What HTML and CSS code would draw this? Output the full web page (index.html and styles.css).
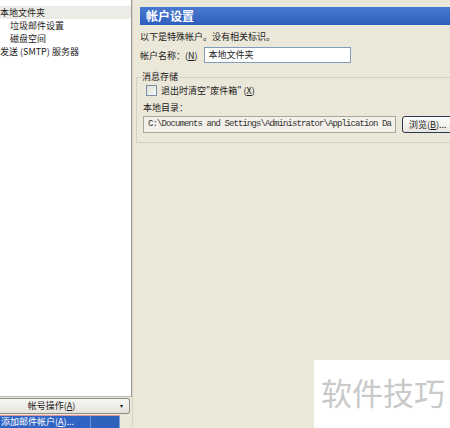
FILE: index.html
```html
<!DOCTYPE html>
<html lang="zh-CN">
<head>
<meta charset="utf-8">
<title>帐户设置</title>
<link rel="stylesheet" href="styles.css">
</head>
<body>
<div class="app">
  <aside class="side">
    <ul class="tree">
      <li class="node root selected">本地文件夹</li>
      <li class="node child">垃圾邮件设置</li>
      <li class="node child">磁盘空间</li>
      <li class="node root">发送 (SMTP) 服务器</li>
    </ul>
    <div class="actions">帐号操作(<u>A</u>)<span class="drop">▾</span></div>
    <div class="menu">
      <div class="menu-item">添加邮件帐户(<u>A</u>)...</div>
    </div>
  </aside>

  <main class="pane">
    <h1 class="title">帐户设置</h1>
    <p class="note">以下是特殊帐户。没有相关标识。</p>
    <div class="field-row">
      <label class="label">帐户名称：(<u>N</u>)</label>
      <div class="input name">本地文件夹</div>
    </div>

    <fieldset class="group">
      <legend class="legend">消息存储</legend>
      <label class="check-row">
        <span class="checkbox"></span>
        <span>退出时清空"废件箱" (<u>X</u>)</span>
      </label>
      <div class="label dir-label">本地目录：</div>
      <div class="dir-row">
        <div class="input path">C:\Documents and Settings\Administrator\Application Da</div>
        <button class="btn">浏览(<u>B</u>)...</button>
      </div>
    </fieldset>
  </main>
</div>
<div class="stamp">软件技巧</div>
</body>
</html>
```

FILE: styles.css
```css
html, body {
  margin: 0;
  padding: 0;
}

body {
  width: 450px;
  height: 428px;
  overflow: hidden;
  position: relative;
  background: #ebe7d9;
  font-family: "Noto Sans CJK SC", "Liberation Sans", sans-serif;
  font-size: 9px;
  color: #1a1a1a;
}

u {
  text-decoration: underline;
}

.app {
  display: flex;
  height: 428px;
}

/* left column: folder tree, action button, popup menu */
.side {
  width: 132px;
  display: flex;
  flex-direction: column;
  flex-shrink: 0;
}

.tree {
  list-style: none;
  margin: 0;
  padding: 6px 0 0;
  flex: 1;
  background: #fff;
  border-right: 1px solid #9c9c9c;
  border-bottom: 1px solid #b8b8b8;
}

.node {
  height: 13px;
  line-height: 13px;
  white-space: nowrap;
}

.node.child {
  padding-left: 10px;
}

.node.selected {
  background: #ecebe6;
}

.actions {
  height: 14px;
  line-height: 14px;
  margin: 1px 2px 0 0;
  position: relative;
  text-align: center;
  padding-right: 26px;
  background: linear-gradient(#f8f8f6, #e4e2da);
  border: 1px solid #8d8d86;
  border-left: none;
  border-radius: 0 3px 3px 0;
}

.drop {
  position: absolute;
  right: 6px;
  top: 0;
  font-size: 6px;
}

.menu {
  display: flex;
  margin-top: 1px;
  border-top: 1px solid #e29393;
  width: 120px;
}

.menu-item {
  flex: 1;
  height: 12px;
  line-height: 12px;
  background: #2f64c4;
  color: #fff;
  white-space: nowrap;
  overflow: hidden;
  border-right: 1px solid #7fa0dc;
  box-shadow: inset -28px 0 0 #2f62bd, inset -29px 0 0 #6b8fd6;
  padding-left: 1px;
}

/* right column: settings page */
.pane {
  flex: 1;
  padding: 7px 0 0 7px;
  border-left: 1px solid #d8d4c4;
  min-width: 0;
}

.title {
  margin: 0;
  height: 18px;
  line-height: 18px;
  padding-left: 6px;
  font-size: 12px;
  font-weight: bold;
  color: #fff;
  background: linear-gradient(#4a78cf, #2f5fbd);
}

.note {
  margin: 5px 0 0;
  line-height: 13px;
}

.field-row {
  display: flex;
  align-items: center;
  margin-top: 4px;
  gap: 6px;
}

.label {
  line-height: 13px;
}

.input {
  background: #fff;
  border: 1px solid #7f9db9;
  box-sizing: border-box;
  white-space: nowrap;
  overflow: hidden;
}

.input.name {
  width: 147px;
  height: 16px;
  line-height: 14px;
  padding-left: 4px;
}

.group {
  margin: 8px 0 0 -4px;
  padding: 0 0 9px 6px;
  border: none;
  border-top: 1px solid #d4d0c0;
  border-left: 1px solid #d4d0c0;
  border-bottom: 1px solid #d4d0c0;
  min-width: 0;
}

.legend {
  padding: 0 2px 0 0;
  line-height: 12px;
  margin-left: -1px;
}

.check-row {
  display: flex;
  align-items: center;
  gap: 4px;
  margin: 1px 0 0 3px;
  line-height: 13px;
}

.checkbox {
  width: 11px;
  height: 11px;
  box-sizing: border-box;
  border: 1px solid #7a8ea8;
  background: linear-gradient(135deg, #dcdcd6, #fbfbf9);
}

.dir-label {
  margin-top: 4px;
}

.dir-row {
  display: flex;
  align-items: center;
  gap: 6px;
  margin-top: 2px;
}

.input.path {
  width: 253px;
  height: 17px;
  line-height: 15px;
  padding-left: 4px;
  flex-shrink: 0;
  background: #f3f1ea;
  border-color: #a9a89e;
  font-family: "Liberation Mono", "DejaVu Sans Mono", monospace;
  font-size: 9px;
  letter-spacing: -0.9px;
  color: #333;
}

.btn {
  height: 17px;
  width: 60px;
  flex-shrink: 0;
  padding: 0 0 0 6px;
  text-align: left;
  font: inherit;
  color: #1a1a1a;
  white-space: nowrap;
  background: linear-gradient(#fdfdfb, #e8e6de);
  border: 1px solid #2e3a54;
  border-radius: 3px;
}

/* corner caption laid over the page */
.stamp {
  position: absolute;
  left: 314px;
  top: 360px;
  width: 136px;
  height: 68px;
  background: #fff;
  box-sizing: border-box;
  padding: 14px 0 0 7px;
  font-size: 31px;
  line-height: 36px;
  color: #c9c9c9;
  white-space: nowrap;
}
```
